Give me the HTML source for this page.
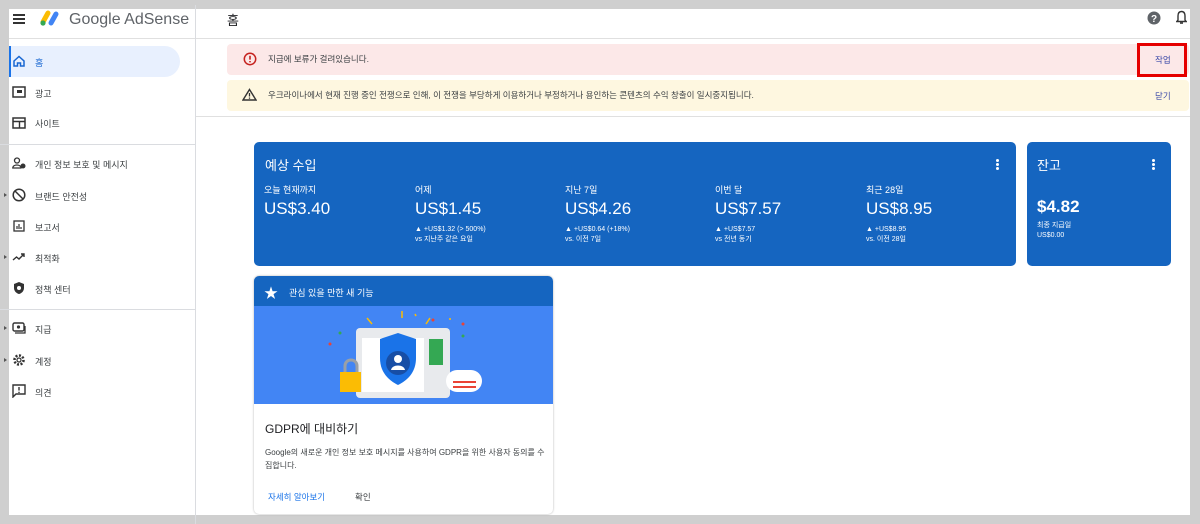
<!DOCTYPE html>
<html><head><meta charset="utf-8"><style>
*{margin:0;padding:0;box-sizing:border-box}
body{width:1200px;height:524px;background:#cfcfcf;position:relative;overflow:hidden;font-family:"Liberation Sans","Noto Sans CJK KR",sans-serif;color:#3c4043}
.a{position:absolute}
.t{font-size:9px;color:#3c4043;white-space:nowrap}
.w{color:#fff}
</style></head><body>
<div class="a" style="left:9px;top:9px;width:1181px;height:506px;background:#fff"></div>
<div class="a" style="left:9px;top:38px;width:1181px;height:1px;background:#e0e0e0"></div>
<div class="a" style="left:195px;top:5px;width:1px;height:519px;background:#dadce0"></div>
<div class="a" style="left:13px;top:14px;width:12px;height:2px;background:#333;box-shadow:0 4px 0 #333,0 8px 0 #333"></div>
<svg class="a" style="left:39px;top:9px" width="22" height="18" viewBox="0 0 22 18"><line x1="9" y1="4" x2="4" y2="13" stroke="#fbbc04" stroke-width="5" stroke-linecap="round"/><line x1="17" y1="5" x2="12" y2="14" stroke="#4285f4" stroke-width="5" stroke-linecap="round"/><circle cx="4" cy="14" r="2.6" fill="#34a853"/></svg>
<div class="a" style="left:69px;top:11px;font-size:16px;color:#5f6368">Google AdSense</div>
<div class="a" style="left:227px;top:10px;font-size:13px;color:#202124">홈</div>
<svg class="a" style="left:1147px;top:11px" width="14" height="14"><circle cx="7" cy="7" r="6.5" fill="#5f6368"/><text x="7" y="11" font-size="10" font-weight="bold" fill="#fff" text-anchor="middle" font-family="Liberation Sans">?</text></svg>
<svg class="a" style="left:1176px;top:10px" width="11" height="15" viewBox="0 0 11 15"><path d="M5.5 1.5 C2.5 1.5 2 4 2 6 L2 10 L0.8 11.5 L10.2 11.5 L9 10 L9 6 C9 4 8.5 1.5 5.5 1.5Z" fill="none" stroke="#333" stroke-width="1.4"/><path d="M4 13h3" stroke="#333" stroke-width="1.6"/></svg>
<div class="a" style="left:9px;top:46px;width:171px;height:31px;background:#e8f0fe;border-radius:0 16px 16px 0"></div>
<div class="a" style="left:9px;top:46px;width:2px;height:31px;background:#1a73e8"></div>
<svg class="a" style="left:13px;top:55px" width="12" height="12"><path d="M1 6L6 1.5 11 6V11H7.5V8H4.5V11H1Z" fill="none" stroke="#1967d2" stroke-width="1.5"/></svg>
<div class="a t" style="left:35px;top:56px;color:#1967d2">홈</div>
<svg class="a" style="left:12px;top:86px" width="14" height="12"><rect x="1" y="1" width="12" height="10" fill="none" stroke="#333" stroke-width="1.5"/><rect x="5" y="4" width="5" height="3" fill="#333"/></svg>
<div class="a t" style="left:35px;top:87px">광고</div>
<svg class="a" style="left:12px;top:117px" width="14" height="12"><rect x="1" y="1" width="12" height="10" fill="none" stroke="#333" stroke-width="1.5"/><path d="M1 4.5H13M7.5 4.5V11" stroke="#333" stroke-width="1.4"/></svg>
<div class="a t" style="left:35px;top:117px">사이트</div>
<div class="a" style="left:0;top:144px;width:195px;height:1px;background:#dadce0"></div>
<svg class="a" style="left:12px;top:157px" width="14" height="12"><circle cx="5" cy="3.5" r="2.5" fill="none" stroke="#333" stroke-width="1.3"/><path d="M0.8 11C0.8 7 9 7 9 11Z" fill="none" stroke="#333" stroke-width="1.3"/><circle cx="11" cy="9" r="2.5" fill="#333"/></svg>
<div class="a t" style="left:35px;top:158px">개인 정보 보호 및 메시지</div>
<svg class="a" style="left:12px;top:188px" width="14" height="14"><circle cx="7" cy="7" r="5.8" fill="none" stroke="#333" stroke-width="1.5"/><path d="M3 3L11 11" stroke="#333" stroke-width="1.5"/></svg>
<div class="a t" style="left:35px;top:190px">브랜드 안전성</div>
<svg class="a" style="left:13px;top:220px" width="12" height="12"><rect x="1" y="1" width="10" height="10" fill="none" stroke="#333" stroke-width="1.3"/><path d="M4 9V6M6 9V4M8 9V7" stroke="#333" stroke-width="1.2"/></svg>
<div class="a t" style="left:35px;top:221px">보고서</div>
<svg class="a" style="left:12px;top:252px" width="14" height="10"><path d="M1 8L4.5 5 7 7 12 2M9 2H12V5" fill="none" stroke="#333" stroke-width="1.4"/></svg>
<div class="a t" style="left:35px;top:252px">최적화</div>
<svg class="a" style="left:13px;top:281px" width="12" height="14"><path d="M6 1L11 3V7C11 10 8.5 12.5 6 13 3.5 12.5 1 10 1 7V3Z" fill="#333"/><circle cx="6" cy="7" r="2" fill="#fff"/></svg>
<div class="a t" style="left:35px;top:283px">정책 센터</div>
<div class="a" style="left:0;top:309px;width:195px;height:1px;background:#dadce0"></div>
<svg class="a" style="left:12px;top:322px" width="14" height="12"><rect x="1" y="1" width="11" height="8" rx="1.5" fill="none" stroke="#333" stroke-width="1.4"/><circle cx="6.5" cy="5" r="1.6" fill="#333"/><path d="M3 11H13V4" fill="none" stroke="#333" stroke-width="1.3"/></svg>
<div class="a t" style="left:35px;top:323px">지급</div>
<svg class="a" style="left:12px;top:353px" width="14" height="14"><circle cx="7" cy="7" r="4.5" fill="none" stroke="#333" stroke-width="2.6" stroke-dasharray="2 1.5"/><circle cx="7" cy="7" r="2" fill="none" stroke="#333" stroke-width="1.2"/></svg>
<div class="a t" style="left:35px;top:355px">계정</div>
<svg class="a" style="left:12px;top:384px" width="14" height="14"><path d="M1 1H13V10H4L1 13Z" fill="none" stroke="#333" stroke-width="1.4"/><path d="M7 3V6.5M7 7.8V9" stroke="#333" stroke-width="1.4"/></svg>
<div class="a t" style="left:35px;top:386px">의견</div>
<div class="a" style="left:4px;top:193px;border-left:3px solid #555;border-top:2px solid transparent;border-bottom:2px solid transparent"></div>
<div class="a" style="left:4px;top:255px;border-left:3px solid #555;border-top:2px solid transparent;border-bottom:2px solid transparent"></div>
<div class="a" style="left:4px;top:326px;border-left:3px solid #555;border-top:2px solid transparent;border-bottom:2px solid transparent"></div>
<div class="a" style="left:4px;top:358px;border-left:3px solid #555;border-top:2px solid transparent;border-bottom:2px solid transparent"></div>
<div class="a" style="left:227px;top:44px;width:962px;height:31px;background:#fce8e8;border-radius:4px"></div>
<svg class="a" style="left:243px;top:52px" width="14" height="14"><circle cx="7" cy="7" r="5.7" fill="none" stroke="#c5221f" stroke-width="1.5"/><path d="M7 3.8V7.6M7 9V10.4" stroke="#c5221f" stroke-width="1.6"/></svg>
<div class="a t" style="left:268px;top:53px;font-size:8.5px">지급에 보류가 걸려있습니다.</div>
<div class="a t" style="left:1155px;top:54px;color:#3c4aa8;font-size:8.5px">작업</div>
<div class="a" style="left:1137px;top:43px;width:50px;height:34px;border:3px solid #e50000"></div>
<div class="a" style="left:227px;top:80px;width:962px;height:31px;background:#fef7e0;border-radius:4px"></div>
<svg class="a" style="left:242px;top:88px" width="15" height="13"><path d="M7.5 1.5L14 12H1Z" fill="none" stroke="#333" stroke-width="1.4"/><path d="M7.5 5V8.5M7.5 9.5V10.8" stroke="#333" stroke-width="1.3"/></svg>
<div class="a t" style="left:268px;top:89px;font-size:8.5px">우크라이나에서 현재 진행 중인 전쟁으로 인해, 이 전쟁을 부당하게 이용하거나 부정하거나 용인하는 콘텐츠의 수익 창출이 일시중지됩니다.</div>
<div class="a t" style="left:1155px;top:90px;color:#3c4aa8;font-size:8.5px">닫기</div>
<div class="a" style="left:196px;top:116px;width:994px;height:1px;background:#e0e0e0"></div>
<div class="a" style="left:254px;top:142px;width:762px;height:124px;background:#1565c0;border-radius:5px"></div>
<div class="a w" style="left:265px;top:155px;font-size:13px">예상 수입</div>
<div class="a" style="left:996px;top:159px;width:3px;height:3px;background:#fff;border-radius:50%;box-shadow:0 4px 0 #fff,0 8px 0 #fff"></div>
<div class="a t w" style="left:264px;top:183px">오늘 현재까지</div>
<div class="a w" style="left:264px;top:199px;font-size:17px">US$3.40</div>
<div class="a t w" style="left:415px;top:183px">어제</div>
<div class="a w" style="left:415px;top:199px;font-size:17px">US$1.45</div>
<div class="a t w" style="left:415px;top:225px;font-size:7px;line-height:10px">▲ +US$1.32 (&gt; 500%)<br>vs 지난주 같은 요일</div>
<div class="a t w" style="left:565px;top:183px">지난 7일</div>
<div class="a w" style="left:565px;top:199px;font-size:17px">US$4.26</div>
<div class="a t w" style="left:565px;top:225px;font-size:7px;line-height:10px">▲ +US$0.64 (+18%)<br>vs. 이전 7일</div>
<div class="a t w" style="left:715px;top:183px">이번 달</div>
<div class="a w" style="left:715px;top:199px;font-size:17px">US$7.57</div>
<div class="a t w" style="left:715px;top:225px;font-size:7px;line-height:10px">▲ +US$7.57<br>vs 전년 동기</div>
<div class="a t w" style="left:866px;top:183px">최근 28일</div>
<div class="a w" style="left:866px;top:199px;font-size:17px">US$8.95</div>
<div class="a t w" style="left:866px;top:225px;font-size:7px;line-height:10px">▲ +US$8.95<br>vs. 이전 28일</div>
<div class="a" style="left:1027px;top:142px;width:144px;height:124px;background:#1565c0;border-radius:5px"></div>
<div class="a w" style="left:1037px;top:155px;font-size:13px">잔고</div>
<div class="a" style="left:1152px;top:159px;width:3px;height:3px;background:#fff;border-radius:50%;box-shadow:0 4px 0 #fff,0 8px 0 #fff"></div>
<div class="a w" style="left:1037px;top:197px;font-size:17px;font-weight:bold">$4.82</div>
<div class="a t w" style="left:1037px;top:221px;font-size:7px;line-height:10px">최종 지급일<br>US$0.00</div>
<div class="a" style="left:254px;top:276px;width:299px;height:238px;background:#fff;border-radius:5px;box-shadow:0 0 2px rgba(0,0,0,.3);overflow:hidden">
 <div style="height:30px;background:#1565c0"></div>
 <div style="height:98px;background:#4285f4"></div>
</div>
<div class="a w" style="left:264px;top:283px;font-size:14px">★</div>
<div class="a t w" style="left:289px;top:286px">관심 있을 만한 새 기능</div>
<svg class="a" style="left:320px;top:306px" width="170" height="98" viewBox="0 0 170 98">
 <rect x="36" y="22" width="94" height="70" rx="4" fill="#e8eaed"/>
 <rect x="42" y="32" width="62" height="54" fill="#fff"/>
 <rect x="109" y="33" width="14" height="26" fill="#34a853"/>
 <path d="M78 27L96 33V52C96 66 88 74 78 79 68 74 60 66 60 52V33Z" fill="#1a73e8"/>
 <circle cx="78" cy="57" r="12" fill="#174ea6"/><circle cx="78" cy="53" r="4" fill="#fff"/><path d="M71 64C72 58 84 58 85 64Z" fill="#fff"/>
 <path d="M25 67V60C25 52 37 52 37 60V67" fill="none" stroke="#9aa0a6" stroke-width="3"/>
 <rect x="20" y="66" width="21" height="20" fill="#fbbc04"/>
 <rect x="126" y="64" width="36" height="22" rx="11" fill="#fff"/>
 <path d="M133 76H156M133 81H156" stroke="#ea4335" stroke-width="2"/>
 <path d="M82 5V12M47 12L52 18M110 12L106 18M95 8L96 10M130 12L130 14" stroke="#fbbc04" stroke-width="1.5"/>
 <circle cx="10" cy="38" r="1.5" fill="#ea4335"/><circle cx="113" cy="14" r="1.5" fill="#ea4335"/><circle cx="143" cy="18" r="1.5" fill="#ea4335"/><circle cx="20" cy="27" r="1.5" fill="#34a853"/><circle cx="143" cy="30" r="1.5" fill="#34a853"/>
</svg>
<div class="a" style="left:265px;top:420px;font-size:12px;color:#202124">GDPR에 대비하기</div>
<div class="a" style="left:265px;top:446px;font-size:8px;line-height:13px;width:280px;color:#3c4043">Google의 새로운 개인 정보 보호 메시지를 사용하여 GDPR을 위한 사용자 동의를 수집합니다.</div>
<div class="a t" style="left:268px;top:491px;color:#1a73e8;font-size:8.5px">자세히 알아보기</div>
<div class="a t" style="left:355px;top:491px;font-size:8.5px">확인</div>
</body></html>
